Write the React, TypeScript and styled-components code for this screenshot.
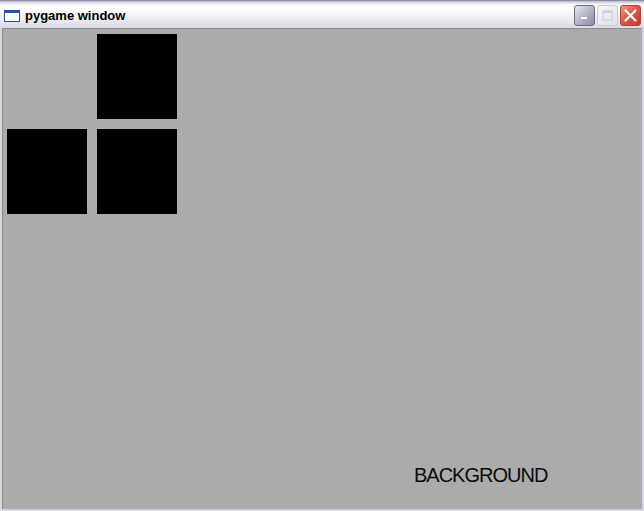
import React from 'react'
import styled, { createGlobalStyle } from 'styled-components'

const GlobalStyle = createGlobalStyle`
  html, body {
    margin: 0;
    padding: 0;
    background: #ffffff;
  }
`

const Window = styled.div`
  width: 644px;
  height: 511px;
  box-sizing: border-box;
  display: flex;
  flex-direction: column;
  border-left: 2px solid #d6d6de;
  border-right: 2px solid #d6d6de;
  border-bottom: 2px solid #d6d6de;
  background: #d6d6de;
`

const TitleBar = styled.div`
  height: 28px;
  flex: none;
  display: flex;
  align-items: center;
  padding: 0 3px 0 2px;
  box-sizing: border-box;
  border-top: 1px solid #8a8aa0;
  background: linear-gradient(
    to bottom,
    #b8b8cc 0px,
    #f4f4f8 3px,
    #ffffff 8px,
    #ececf2 18px,
    #dcdce6 26px
  );
  margin: 0 -2px;
`

const AppIcon = styled.div`
  width: 16px;
  height: 12px;
  margin-left: 2px;
  margin-top: 2px;
  box-sizing: border-box;
  border: 1px solid #2c4fa8;
  border-top-width: 3px;
  background: #ffffff;
`

const Title = styled.span`
  margin-left: 5px;
  margin-top: 1px;
  font-family: 'Liberation Sans', Arial, sans-serif;
  font-weight: bold;
  font-size: 13px;
  color: #000000;
  flex: 1;
`

const Controls = styled.div`
  display: flex;
  gap: 2px;
  margin-top: 1px;
`

const CtrlButton = styled.div<{ $variant: 'min' | 'max' | 'close' }>`
  width: 21px;
  height: 21px;
  box-sizing: border-box;
  border-radius: 3px;
  display: flex;
  align-items: center;
  justify-content: center;
  border: 1px solid
    ${p => (p.$variant === 'close' ? '#b04030' : p.$variant === 'max' ? '#c8c8d8' : '#6a6a88')};
  background: ${p =>
    p.$variant === 'close'
      ? 'linear-gradient(135deg, #f0a090 0%, #d85a48 45%, #c03a2c 100%)'
      : p.$variant === 'max'
      ? 'linear-gradient(135deg, #f6f6fa 0%, #e0e0ea 100%)'
      : 'linear-gradient(135deg, #e8e8f4 0%, #b0b0c8 55%, #8c8cac 100%)'};
`

const Canvas = styled.div`
  position: relative;
  flex: 1;
  background: #ababab;
  border-top: 1px solid #8c8c8c;
  border-left: 1px solid #8c8c8c;
  overflow: hidden;
`

const Block = styled.div<{ $x: number; $y: number }>`
  position: absolute;
  left: ${p => p.$x}px;
  top: ${p => p.$y}px;
  width: 80px;
  height: 85px;
  background: #000000;
`

const Label = styled.div`
  position: absolute;
  left: 411px;
  top: 435px;
  font-family: 'Liberation Sans', Arial, sans-serif;
  font-size: 20px;
  letter-spacing: -1px;
  color: #0a0a0a;
`

// canvas origin is at page (3, 29)
const blocks = [
  { x: 94, y: 5 },
  { x: 4, y: 100 },
  { x: 94, y: 100 }
]

export default function App() {
  return (
    <>
      <GlobalStyle />
      <Window>
        <TitleBar>
          <AppIcon />
          <Title>pygame window</Title>
          <Controls>
            <CtrlButton $variant="min">
              <svg width="9" height="9" viewBox="0 0 9 9">
                <rect x="1" y="6" width="6" height="2" fill="#ffffff" />
              </svg>
            </CtrlButton>
            <CtrlButton $variant="max">
              <svg width="11" height="11" viewBox="0 0 11 11">
                <rect x="1" y="1" width="9" height="9" fill="none" stroke="#d0d0dc" strokeWidth="1.2" />
                <rect x="1" y="1" width="9" height="2" fill="#d0d0dc" />
              </svg>
            </CtrlButton>
            <CtrlButton $variant="close">
              <svg width="15" height="15" viewBox="0 0 15 15">
                <path d="M2.5 2.5 L12.5 12.5 M12.5 2.5 L2.5 12.5" stroke="#ffffff" strokeWidth="2.2" strokeLinecap="round" />
              </svg>
            </CtrlButton>
          </Controls>
        </TitleBar>
        <Canvas>
          {blocks.map((b, i) => (
            <Block key={i} $x={b.x} $y={b.y} />
          ))}
          <Label>BACKGROUND</Label>
        </Canvas>
      </Window>
    </>
  )
}
